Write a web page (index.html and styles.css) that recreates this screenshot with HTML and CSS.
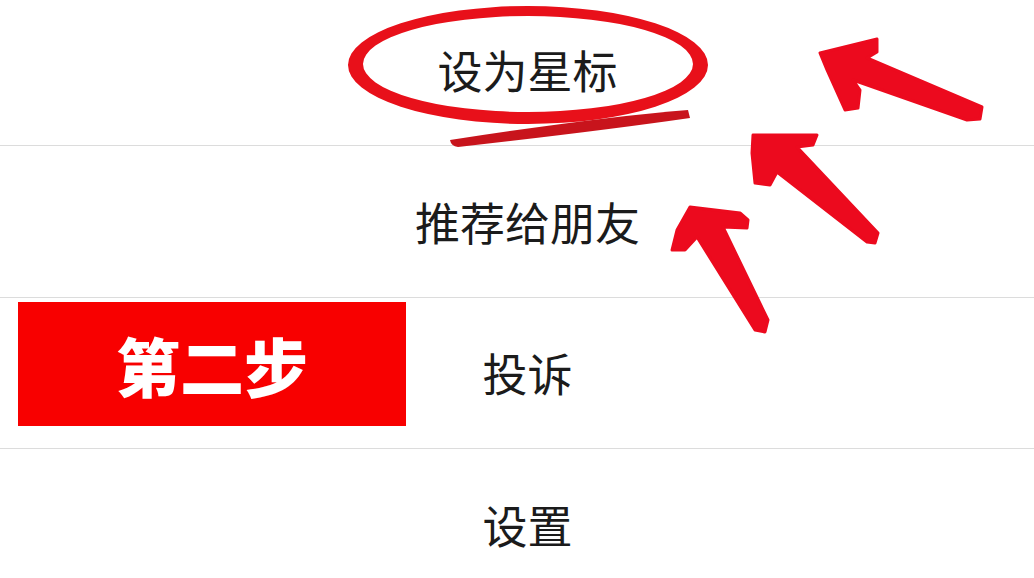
FILE: index.html
```html
<!DOCTYPE html>
<html lang="zh-CN">
<head>
<meta charset="utf-8">
<title>设为星标</title>
<link rel="stylesheet" href="styles.css">
</head>
<body>
<div class="page">
  <ul class="menu">
    <li class="menu-item">设为星标</li>
    <li class="menu-item">推荐给朋友</li>
    <li class="menu-item">投诉</li>
    <li class="menu-item">设置</li>
  </ul>
  <div class="step-badge">第二步</div>
  <svg class="marks" width="1034" height="578" viewBox="0 0 1034 578" xmlns="http://www.w3.org/2000/svg">
    <path class="ring" fill-rule="evenodd" d="M348 65 A180 59 0 1 0 708 65 A180 59 0 1 0 348 65 Z M363 64 A165 48 0 1 0 693 64 A165 48 0 1 0 363 64 Z"/>
    <path class="tail" d="M688 110 Q600 117 450 140 Q451 146 458 147 Q600 131 690 118 Z"/>
    <polygon class="arrow" points="820,53 877,39 877,52 867,58 982,107 980,119 967,120 853,80 860,90 858,108 845,110 827,70"/>
    <polygon class="arrow" points="753,135 817,135 813,145 797,147 878,233 875,243 867,242 777,172 770,185 755,183 752,153"/>
    <polygon class="arrow" points="690,207 740,213 748,220 747,228 723,227 768,320 765,332 755,330 697,237 685,250 672,250 677,230"/>
  </svg>
</div>
</body>
</html>
```

FILE: styles.css
```css
html, body {
  margin: 0;
  padding: 0;
  background: #ffffff;
}

.page {
  position: relative;
  width: 1034px;
  height: 578px;
  overflow: hidden;
  font-family: "Noto Sans CJK SC", "Noto Sans", sans-serif;
}

.menu {
  list-style: none;
  margin: -5.5px 0 0 0;
  padding: 0;
}

.menu-item {
  box-sizing: border-box;
  height: 151.5px;
  border-bottom: 1px solid #dcdcdc;
  display: flex;
  align-items: center;
  justify-content: center;
  padding-left: 21px;
  font-size: 45px;
  color: #1b1b1b;
}

.menu-item:last-child {
  border-bottom: none;
}

.step-badge {
  position: absolute;
  left: 18px;
  top: 302px;
  width: 388px;
  height: 124px;
  background: #f80000;
  color: #ffffff;
  display: flex;
  align-items: center;
  justify-content: center;
  font-size: 64px;
  font-weight: 900;
  line-height: 1;
}

.marks {
  position: absolute;
  left: 0;
  top: 0;
  pointer-events: none;
}

.ring {
  fill: #e8101a;
}

.tail {
  fill: #c8141c;
}

.arrow {
  fill: #ec0a1e;
  stroke: #ec0a1e;
  stroke-width: 3;
  stroke-linejoin: round;
}
```
